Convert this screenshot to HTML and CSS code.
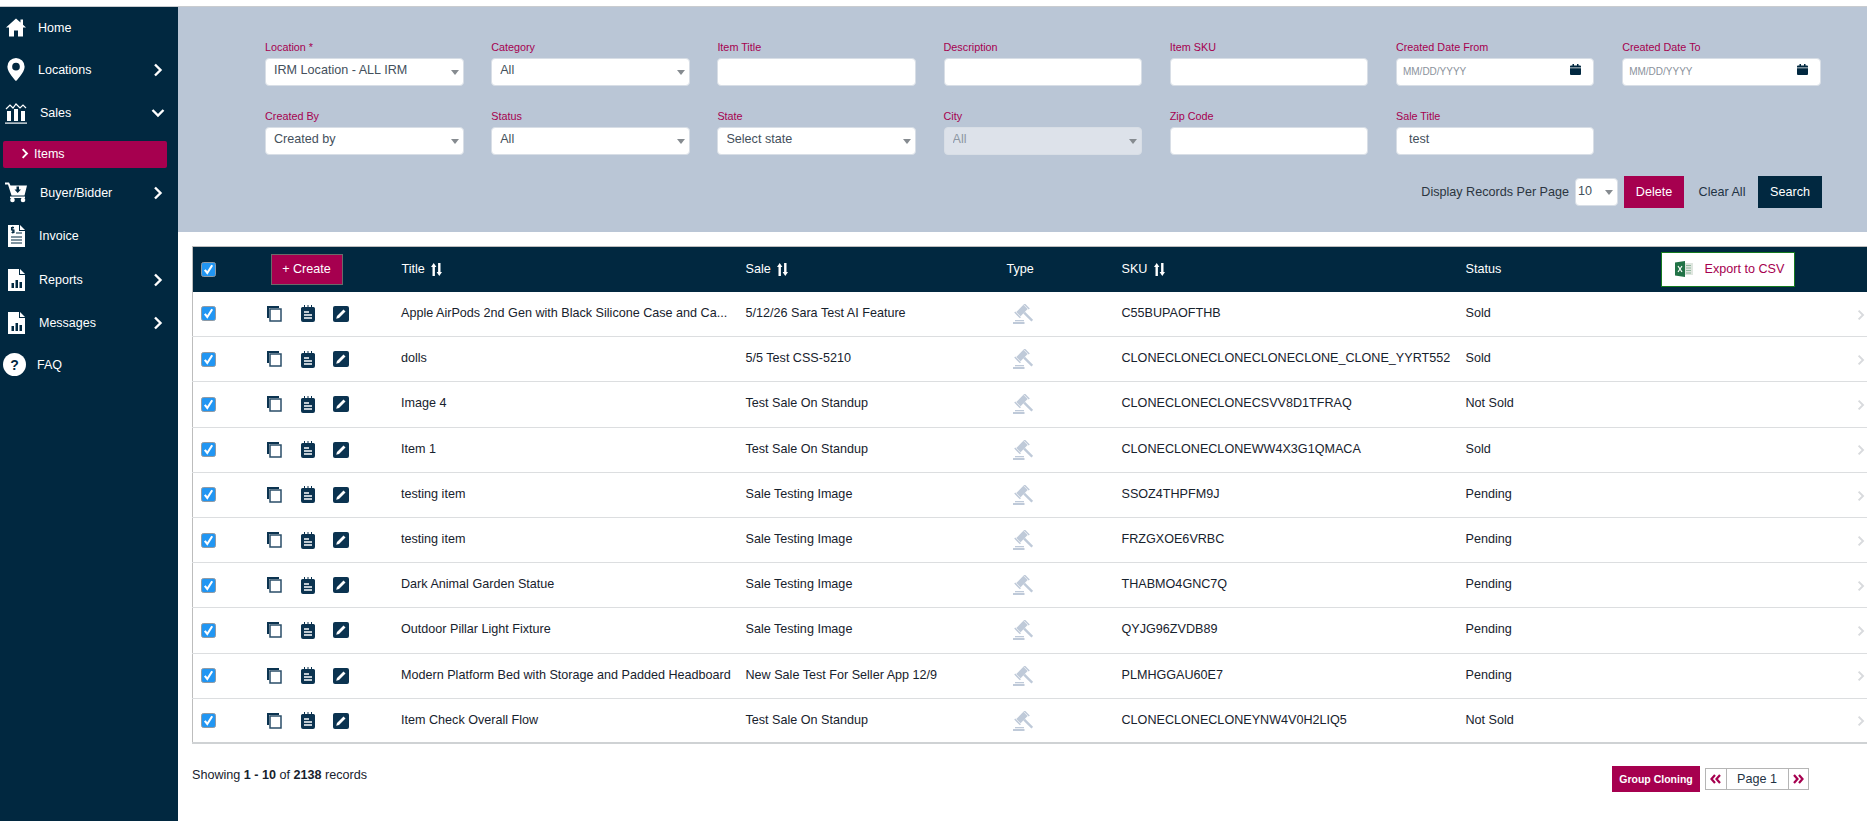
FILE: index.html
```html
<!DOCTYPE html>
<html lang="en">
<head>
<meta charset="utf-8">
<title>Items</title>
<link rel="stylesheet" href="styles.css">
</head>
<body>
<svg class="defs" width="0" height="0" aria-hidden="true">
  <defs>
    <symbol id="i-chev" viewBox="0 0 10 14"><path d="M2 1.500 7.500 7 2 12.500" fill="none" stroke="currentColor" stroke-width="2.400"/></symbol>
    <symbol id="i-dbl-l" viewBox="0 0 11 10"><path d="M5 1 1.500 5 5 9M10 1 6.500 5 10 9" fill="none" stroke="currentColor" stroke-width="2.200"/></symbol>
    <symbol id="i-dbl-r" viewBox="0 0 11 10"><path d="M1 1 4.500 5 1 9M6 1 9.500 5 6 9" fill="none" stroke="currentColor" stroke-width="2.200"/></symbol>
    <symbol id="i-check" viewBox="0 0 15 15"><rect x=".5" y=".5" width="14" height="14" rx="2" fill="#2196f3" stroke="#8f9aa5"/><path d="M3.800 7.800 6.300 11 11.200 3.300" fill="none" stroke="#fff" stroke-width="2.100"/></symbol>
    <symbol id="i-copy" viewBox="0 0 15 16"><path d="M0 0H12V2H2V12H0Z" fill="#0b3350"/><rect x="3" y="3" width="11" height="12" fill="#fff" stroke="#2a4d68" stroke-width="1.500"/></symbol>
    <symbol id="i-note" viewBox="0 0 14 17"><path d="M1.500 2H3V0H4V2H6.500V0H7.500V2H10V0H11V2H12.500A1.500 1.500 0 0 1 14 3.500V15A2 2 0 0 1 12 17H2A2 2 0 0 1 0 15V3.500A1.500 1.500 0 0 1 1.500 2Z" fill="#0b3350"/><path d="M3 7H8M3 10H11M3 13H11" stroke="#fff" stroke-width="1.500"/></symbol>
    <symbol id="i-edit" viewBox="0 0 16 16"><rect width="16" height="16" rx="2" fill="#0b3350"/><path d="M3.200 12.800 4 10 10.500 3.500 12.500 5.500 6 12Z" fill="#fff"/></symbol>
    <symbol id="i-gavel" viewBox="0 0 20 20"><g fill="#bfcad9"><g transform="rotate(45 9 6.500)"><rect x="6" y="1.500" width="6" height="10"/><rect x="5" y="-.5" width="8" height="1.500"/><rect x="5" y="12" width="8" height="1.500"/><rect x="12" y="5.300" width="11.500" height="2.400"/></g><rect x="2" y="16" width="9" height="1.300"/><rect x="0" y="18" width="11.500" height="2"/></g></symbol>
    <symbol id="i-sort" viewBox="0 0 11 13"><path d="M1.500 13V4H0L2.700 0 5.400 4H3.900V13ZM7.100 0H9.500V9H11L8.300 13 5.600 9H7.100Z" fill="#fff"/></symbol>
    <symbol id="i-cal" viewBox="0 0 11 11"><path d="M1 1.500H2.500V0H4V1.500H7V0H8.500V1.500H10A1 1 0 0 1 11 2.500V3.500H0V2.500A1 1 0 0 1 1 1.500ZM0 4.300H11V10A1 1 0 0 1 10 11H1A1 1 0 0 1 0 10Z" fill="#012840"/></symbol>
  </defs>
</svg>
<div class="app">
  <nav class="sidebar">
    <a class="nav-item nav-first">
      <svg class="nav-icon" viewBox="0 0 20 18"><path d="M10 0 0 9H3V18H8V12H12V18H17V9H20L17 6.300V1H14.500V4Z" fill="#fff"/></svg>
      <span class="nav-label">Home</span>
    </a>
    <a class="nav-item">
      <svg class="nav-icon" viewBox="0 0 20 24"><path fill-rule="evenodd" d="M10 0A9 9 0 0 0 1 9C1 15 10 24 10 24S19 15 19 9A9 9 0 0 0 10 0ZM10 5A4 4 0 1 1 10 13 4 4 0 0 1 10 5Z" fill="#fff"/></svg>
      <span class="nav-label">Locations</span>
      <svg class="nav-chev"><use href="#i-chev"/></svg>
    </a>
    <a class="nav-item nav-wide">
      <svg class="nav-icon nav-icon-sales" viewBox="0 0 22 21"><path d="M1 6 5 2 8 5 11 1 15 5 18 2 21 5" fill="none" stroke="#fff" stroke-width="1.200"/><path d="M2 8H6V18H2ZM9 6H13V18H9ZM16 8H20V18H16Z" fill="#fff"/><path d="M0 19.500H22V20.700H0Z" fill="#fff"/></svg>
      <span class="nav-label">Sales</span>
      <svg class="nav-chev nav-chev-down"><use href="#i-chev"/></svg>
    </a>
    <a class="nav-sub">
      <svg class="sub-chev"><use href="#i-chev"/></svg>
      <span>Items</span>
    </a>
    <a class="nav-item nav-wide">
      <svg class="nav-icon nav-icon-sales" viewBox="0 0 22 20"><path d="M0 0H4L5.500 3H22L19.500 13H6.500L3 2H0Z" fill="#fff"/><path d="M11.500 4H14V7H16L12.700 10.500 9.500 7H11.500Z" fill="#012840"/><path d="M5 14H20V15.500H5Z" fill="#fff"/><circle cx="7.500" cy="17.500" r="2.300" fill="#fff"/><circle cx="18" cy="17.500" r="2.300" fill="#fff"/></svg>
      <span class="nav-label">Buyer/Bidder</span>
      <svg class="nav-chev"><use href="#i-chev"/></svg>
    </a>
    <a class="nav-item nav-wide">
      <svg class="nav-icon nav-icon-doc" viewBox="0 0 17 22"><path d="M0 0H11V6H17V22H0Z" fill="#fff"/><path d="M12 0 17 5H12Z" fill="#fff"/><path d="M3 12H14M3 15H14M3 18H14" stroke="#012840" stroke-width="1"/><path d="M6 2.500H3.500V5H6V7.500H3.500M4.800 1.500V8.500M8 8H14" fill="none" stroke="#012840" stroke-width="1.100"/></svg>
      <span class="nav-label">Invoice</span>
    </a>
    <a class="nav-item nav-wide">
      <svg class="nav-icon nav-icon-doc" viewBox="0 0 17 22"><path d="M0 0H11V6H17V22H0Z" fill="#fff"/><path d="M12 0 17 5H12Z" fill="#fff"/><path d="M3.500 14H6V19H3.500ZM7.500 11H10V19H7.500ZM11.500 13H14V19H11.500Z" fill="#012840"/></svg>
      <span class="nav-label">Reports</span>
      <svg class="nav-chev"><use href="#i-chev"/></svg>
    </a>
    <a class="nav-item nav-wide">
      <svg class="nav-icon nav-icon-doc" viewBox="0 0 17 22"><path d="M0 0H11V6H17V22H0Z" fill="#fff"/><path d="M12 0 17 5H12Z" fill="#fff"/><path d="M3.500 14H6V19H3.500ZM7.500 11H10V19H7.500ZM11.500 13H14V19H11.500Z" fill="#012840"/></svg>
      <span class="nav-label">Messages</span>
      <svg class="nav-chev"><use href="#i-chev"/></svg>
    </a>
    <a class="nav-item nav-faq">
      <span class="faq-badge">?</span>
      <span class="nav-label">FAQ</span>
    </a>
  </nav>

  <main class="main">
    <form class="filters">
      <div class="filter-grid">
        <label class="field"><span class="field-label">Location *</span><span class="select-wrap"><select class="control"><option>IRM Location - ALL IRM</option></select></span></label>
        <label class="field"><span class="field-label">Category</span><span class="select-wrap"><select class="control"><option>All</option></select></span></label>
        <label class="field"><span class="field-label">Item Title</span><input class="control" type="text"></label>
        <label class="field"><span class="field-label">Description</span><input class="control" type="text"></label>
        <label class="field"><span class="field-label">Item SKU</span><input class="control" type="text"></label>
        <label class="field"><span class="field-label">Created Date From</span><span class="date-wrap"><input class="control control-date" type="text" placeholder="MM/DD/YYYY"><svg class="cal"><use href="#i-cal"/></svg></span></label>
        <label class="field"><span class="field-label">Created Date To</span><span class="date-wrap"><input class="control control-date" type="text" placeholder="MM/DD/YYYY"><svg class="cal"><use href="#i-cal"/></svg></span></label>
        <label class="field"><span class="field-label">Created By</span><span class="select-wrap"><select class="control"><option>Created by</option></select></span></label>
        <label class="field"><span class="field-label">Status</span><span class="select-wrap"><select class="control"><option>All</option></select></span></label>
        <label class="field"><span class="field-label">State</span><span class="select-wrap"><select class="control"><option>Select state</option></select></span></label>
        <label class="field"><span class="field-label">City</span><span class="select-wrap"><select class="control" disabled><option>All</option></select></span></label>
        <label class="field"><span class="field-label">Zip Code</span><input class="control" type="text"></label>
        <label class="field"><span class="field-label">Sale Title</span><input class="control control-text" type="text" value="test"></label>
      </div>
      <div class="filter-actions">
        <span class="per-page-label">Display Records Per Page</span>
        <span class="select-wrap per-page"><select class="control"><option>10</option></select></span>
        <button class="btn btn-crimson" type="button">Delete</button>
        <button class="btn btn-clear" type="button">Clear All</button>
        <button class="btn btn-navy" type="button">Search</button>
      </div>
    </form>

    <section class="table-wrap">
      <table class="grid">
        <colgroup><col class="c-check"><col class="c-act"><col class="c-title"><col class="c-sale"><col class="c-type"><col class="c-sku"><col class="c-status"><col class="c-end"></colgroup>
        <thead>
          <tr>
            <th><svg class="check"><use href="#i-check"/></svg></th>
            <th><button class="btn-create" type="button">+ Create</button></th>
            <th class="th-text">Title <svg class="sort"><use href="#i-sort"/></svg></th>
            <th class="th-text">Sale <svg class="sort"><use href="#i-sort"/></svg></th>
            <th class="th-text th-type">Type</th>
            <th class="th-text">SKU <svg class="sort"><use href="#i-sort"/></svg></th>
            <th class="th-text">Status</th>
            <th><button class="btn-export" type="button">
              <svg class="xls" viewBox="0 0 18 16"><path d="M6 2H18V14H6Z" fill="#dfe6df"/><path d="M11 4.500H16M11 7H16M11 9.500H16M11 12H16" stroke="#8fb79d"/><path d="M0 1.500 10 0V16L0 14.500Z" fill="#217346"/><path d="M3 5 7 11M7 5 3 11" stroke="#fff" stroke-width="1.200"/></svg>
              <span>Export to CSV</span></button></th>
          </tr>
        </thead>
        <tbody>
          <tr><td><svg class="check"><use href="#i-check"/></svg></td><td><span class="actions"><svg class="a-copy"><use href="#i-copy"/></svg><svg class="a-note"><use href="#i-note"/></svg><svg class="a-edit"><use href="#i-edit"/></svg></span></td><td>Apple AirPods 2nd Gen with Black Silicone Case and Ca...</td><td>5/12/26 Sara Test AI Feature</td><td><svg class="gavel"><use href="#i-gavel"/></svg></td><td>C55BUPAOFTHB</td><td>Sold</td><td class="td-end"><svg class="row-chev"><use href="#i-chev"/></svg></td></tr>
          <tr><td><svg class="check"><use href="#i-check"/></svg></td><td><span class="actions"><svg class="a-copy"><use href="#i-copy"/></svg><svg class="a-note"><use href="#i-note"/></svg><svg class="a-edit"><use href="#i-edit"/></svg></span></td><td>dolls</td><td>5/5 Test CSS-5210</td><td><svg class="gavel"><use href="#i-gavel"/></svg></td><td>CLONECLONECLONECLONECLONE_CLONE_YYRT552</td><td>Sold</td><td class="td-end"><svg class="row-chev"><use href="#i-chev"/></svg></td></tr>
          <tr><td><svg class="check"><use href="#i-check"/></svg></td><td><span class="actions"><svg class="a-copy"><use href="#i-copy"/></svg><svg class="a-note"><use href="#i-note"/></svg><svg class="a-edit"><use href="#i-edit"/></svg></span></td><td>Image 4</td><td>Test Sale On Standup</td><td><svg class="gavel"><use href="#i-gavel"/></svg></td><td>CLONECLONECLONECSVV8D1TFRAQ</td><td>Not Sold</td><td class="td-end"><svg class="row-chev"><use href="#i-chev"/></svg></td></tr>
          <tr><td><svg class="check"><use href="#i-check"/></svg></td><td><span class="actions"><svg class="a-copy"><use href="#i-copy"/></svg><svg class="a-note"><use href="#i-note"/></svg><svg class="a-edit"><use href="#i-edit"/></svg></span></td><td>Item 1</td><td>Test Sale On Standup</td><td><svg class="gavel"><use href="#i-gavel"/></svg></td><td>CLONECLONECLONEWW4X3G1QMACA</td><td>Sold</td><td class="td-end"><svg class="row-chev"><use href="#i-chev"/></svg></td></tr>
          <tr><td><svg class="check"><use href="#i-check"/></svg></td><td><span class="actions"><svg class="a-copy"><use href="#i-copy"/></svg><svg class="a-note"><use href="#i-note"/></svg><svg class="a-edit"><use href="#i-edit"/></svg></span></td><td>testing item</td><td>Sale Testing Image</td><td><svg class="gavel"><use href="#i-gavel"/></svg></td><td>SSOZ4THPFM9J</td><td>Pending</td><td class="td-end"><svg class="row-chev"><use href="#i-chev"/></svg></td></tr>
          <tr><td><svg class="check"><use href="#i-check"/></svg></td><td><span class="actions"><svg class="a-copy"><use href="#i-copy"/></svg><svg class="a-note"><use href="#i-note"/></svg><svg class="a-edit"><use href="#i-edit"/></svg></span></td><td>testing item</td><td>Sale Testing Image</td><td><svg class="gavel"><use href="#i-gavel"/></svg></td><td>FRZGXOE6VRBC</td><td>Pending</td><td class="td-end"><svg class="row-chev"><use href="#i-chev"/></svg></td></tr>
          <tr><td><svg class="check"><use href="#i-check"/></svg></td><td><span class="actions"><svg class="a-copy"><use href="#i-copy"/></svg><svg class="a-note"><use href="#i-note"/></svg><svg class="a-edit"><use href="#i-edit"/></svg></span></td><td>Dark Animal Garden Statue</td><td>Sale Testing Image</td><td><svg class="gavel"><use href="#i-gavel"/></svg></td><td>THABMO4GNC7Q</td><td>Pending</td><td class="td-end"><svg class="row-chev"><use href="#i-chev"/></svg></td></tr>
          <tr><td><svg class="check"><use href="#i-check"/></svg></td><td><span class="actions"><svg class="a-copy"><use href="#i-copy"/></svg><svg class="a-note"><use href="#i-note"/></svg><svg class="a-edit"><use href="#i-edit"/></svg></span></td><td>Outdoor Pillar Light Fixture</td><td>Sale Testing Image</td><td><svg class="gavel"><use href="#i-gavel"/></svg></td><td>QYJG96ZVDB89</td><td>Pending</td><td class="td-end"><svg class="row-chev"><use href="#i-chev"/></svg></td></tr>
          <tr><td><svg class="check"><use href="#i-check"/></svg></td><td><span class="actions"><svg class="a-copy"><use href="#i-copy"/></svg><svg class="a-note"><use href="#i-note"/></svg><svg class="a-edit"><use href="#i-edit"/></svg></span></td><td>Modern Platform Bed with Storage and Padded Headboard</td><td>New Sale Test For Seller App 12/9</td><td><svg class="gavel"><use href="#i-gavel"/></svg></td><td>PLMHGGAU60E7</td><td>Pending</td><td class="td-end"><svg class="row-chev"><use href="#i-chev"/></svg></td></tr>
          <tr><td><svg class="check"><use href="#i-check"/></svg></td><td><span class="actions"><svg class="a-copy"><use href="#i-copy"/></svg><svg class="a-note"><use href="#i-note"/></svg><svg class="a-edit"><use href="#i-edit"/></svg></span></td><td>Item Check Overall Flow</td><td>Test Sale On Standup</td><td><svg class="gavel"><use href="#i-gavel"/></svg></td><td>CLONECLONECLONEYNW4V0H2LIQ5</td><td>Not Sold</td><td class="td-end"><svg class="row-chev"><use href="#i-chev"/></svg></td></tr>
        </tbody>
      </table>
      <footer class="table-foot">
        <p class="showing">Showing <b>1 - 10</b> of <b>2138</b> records</p>
        <div class="foot-right">
          <button class="btn-group" type="button">Group Cloning</button>
          <div class="pager">
            <span class="pager-arrow"><svg class="dbl"><use href="#i-dbl-l"/></svg></span>
            <span class="pager-page">Page 1</span>
            <span class="pager-arrow"><svg class="dbl"><use href="#i-dbl-r"/></svg></span>
          </div>
        </div>
      </footer>
    </section>
  </main>
</div>
</body>
</html>
```

FILE: styles.css
```css
* { box-sizing: border-box; }
html, body { height: 100%; }
body {
  margin: 0;
  padding-top: 6px;
  background: #fff;
  overflow: hidden;
  font-family: "Liberation Sans", Arial, sans-serif;
  font-size: 12.600px;
  color: #17222d;
}
.defs { display: block; height: 0; }
.app {
  display: flex;
  height: 815px;
  border-top: 1px solid #c9ccd0;
}

/* sidebar */
.sidebar {
  flex: 0 0 178px;
  background: #012840;
  color: #fff;
}
.nav-item {
  display: flex;
  align-items: center;
  height: 43.500px;
  padding-left: 6px;
  font-size: 12.500px;
}
.nav-first { height: 41px; }
.nav-icon { width: 20px; height: 23px; flex: none; }
.nav-icon-sales { width: 22px; height: 21px; margin-left: -1px; }
.nav-icon-doc { width: 17px; height: 22px; margin-left: 2px; }
.nav-label { margin-left: 12px; flex: 1; }
.nav-wide .nav-label { margin-left: 13px; }
.nav-icon-doc + .nav-label { margin-left: 14px; }
.nav-chev { width: 10px; height: 14px; margin-right: 15px; flex: none; color: #fff; }
.nav-chev-down { transform: rotate(90deg); }
.nav-sub {
  display: flex;
  align-items: center;
  height: 27px;
  margin: 6px 11px 3px 3px;
  padding: 0 0 2px 18px;
  gap: 5px;
  background: #a6004f;
  border-radius: 2px;
  color: #fff;
  font-size: 12.500px;
}
.sub-chev { width: 8px; height: 11px; }
.nav-faq { padding-left: 3px; height: 39px; }
.nav-faq .nav-label { margin-left: 11px; }
.faq-badge {
  display: flex;
  align-items: center;
  justify-content: center;
  width: 23px;
  height: 23px;
  border-radius: 50%;
  background: #fff;
  color: #012840;
  font-weight: bold;
  font-size: 14px;
}

/* filters */
.main { flex: 1; min-width: 0; }
.filters {
  height: 225px;
  padding: 34px 0 0 87px;
  background: #bac6d6;
}
.filter-grid {
  display: grid;
  grid-template-columns: repeat(7, 198.500px);
  column-gap: 27.700px;
  row-gap: 24px;
}
.field { display: block; }
.field-label {
  display: block;
  height: 17px;
  font-size: 10.800px;
  line-height: 13px;
  color: #a6004f;
}
.control {
  display: block;
  width: 100%;
  height: 28px;
  padding: 0 8px;
  border: 1px solid #d8dee6;
  border-radius: 4px;
  background: #fff;
  color: #44505c;
  font-family: inherit;
  font-size: 12.600px;
  outline: none;
}
select.control { appearance: none; padding-bottom: 5px; }
select.control:disabled { background: #dde2ea; color: #8d97a3; opacity: 1; }
.control-text { padding-left: 12px; padding-bottom: 4px; }
.control-date { padding-left: 6px; padding-bottom: 2px; }
.control-date::placeholder { color: #8a929b; font-size: 10px; opacity: 1; }
.select-wrap, .date-wrap { position: relative; display: block; }
.select-wrap::after {
  content: "";
  position: absolute;
  right: 5px;
  top: 12px;
  border-left: 4.500px solid transparent;
  border-right: 4.500px solid transparent;
  border-top: 5.500px solid #868b90;
  pointer-events: none;
}
.cal { position: absolute; right: 13px; top: 6px; width: 11px; height: 11px; }

.filter-actions {
  display: flex;
  align-items: center;
  margin: 21px 0 0 0;
  padding-right: 45px;
  justify-content: flex-end;
  height: 32px;
}
.per-page-label { color: #2b3540; margin-right: 6px; }
.per-page { width: 43px; margin-right: 6px; }
.per-page .control { padding: 0 0 3px 2px; }
.btn {
  border: 0;
  height: 32px;
  font-family: inherit;
  font-size: 12.600px;
  cursor: pointer;
}
.btn-crimson { width: 60px; background: #a6004f; color: #fff; }
.btn-clear { width: 74px; padding: 0 0 0 2px; background: none; color: #1f3344; }
.btn-navy { width: 64px; background: #012840; color: #fff; }

/* table */
.table-wrap { padding: 14px 0 0 14px; }
.grid {
  width: 100%;
  table-layout: fixed;
  border-collapse: collapse;
  border-left: 1px solid #bdbdbd;
  border-top: 1px solid #bdbdbd;
  border-bottom: 2px solid #cfd2d4;
}
.c-check { width: 68px; }
.c-act { width: 136px; }
.c-title { width: 344px; }
.c-sale { width: 260px; }
.c-type { width: 116px; }
.c-sku { width: 344px; }
.c-status { width: 186px; }
thead tr { height: 45px; background: #012840; color: #fff; }
th { padding: 0 0 0 5px; text-align: left; font-weight: normal; }
th:first-child, td:first-child { padding-left: 8px; }
th:nth-child(2) { padding-left: 10px; }
.th-type { padding-left: 6px; }
.sort { width: 11px; height: 13px; margin-left: 3px; vertical-align: -3px; }
.check { display: block; width: 15px; height: 15px; }
tbody tr { height: 45.200px; border-top: 1px solid #dcdee0; }
tbody tr:first-child { border-top: 0; }
td { padding: 0 0 0 5px; white-space: nowrap; }
td:nth-child(2) { padding-left: 6px; }
td:nth-child(3) { padding-left: 4.500px; }
td:nth-child(3), td:nth-child(4), td:nth-child(6), td:nth-child(7) { padding-bottom: 2px; }
.btn-create {
  display: block;
  width: 72px;
  height: 31px;
  border: 1px solid #6a6a6a;
  background: #a6004f;
  color: #fff;
  font-family: inherit;
  font-size: 12.600px;
  padding: 0;
}
.btn-export {
  display: flex;
  align-items: center;
  width: 134px;
  height: 35px;
  padding: 0 0 0 13px;
  gap: 12px;
  border: 1px solid #157a1e;
  background: #fff;
  color: #a6004f;
  font-family: inherit;
  font-size: 12.600px;
  margin-left: 9px;
}
.xls { width: 18px; height: 16px; }
.actions { display: flex; align-items: center; }
.a-copy { width: 15px; height: 16px; }
.a-note { width: 14px; height: 17px; margin-left: 19px; }
.a-edit { width: 16px; height: 16px; margin-left: 18px; }
.gavel { display: block; width: 20px; height: 20px; margin-left: 7px; }
.td-end { text-align: right; padding-right: 2px; }
.row-chev { width: 8px; height: 12px; color: #d8dadd; vertical-align: middle; }

/* footer */
.table-foot {
  display: flex;
  justify-content: space-between;
  align-items: flex-start;
  padding: 22px 58px 0 0;
}
.showing { margin: 2px 0 0; }
.foot-right { display: flex; align-items: center; gap: 5px; }
.btn-group {
  width: 88px;
  height: 26px;
  border: 0;
  background: #a6004f;
  color: #fff;
  font-family: inherit;
  font-size: 10.500px;
  font-weight: bold;
  padding: 0;
}
.pager {
  display: flex;
  height: 22px;
  border: 1px solid #b5b5b5;
  align-items: stretch;
}
.pager-arrow {
  display: flex;
  align-items: center;
  justify-content: center;
  width: 19.500px;
  color: #a6004f;
}
.dbl { width: 11px; height: 10px; }
.pager-page {
  display: flex;
  align-items: center;
  justify-content: center;
  width: 63px;
  border-left: 1px solid #b5b5b5;
  border-right: 1px solid #b5b5b5;
  color: #1f3344;
}
```
